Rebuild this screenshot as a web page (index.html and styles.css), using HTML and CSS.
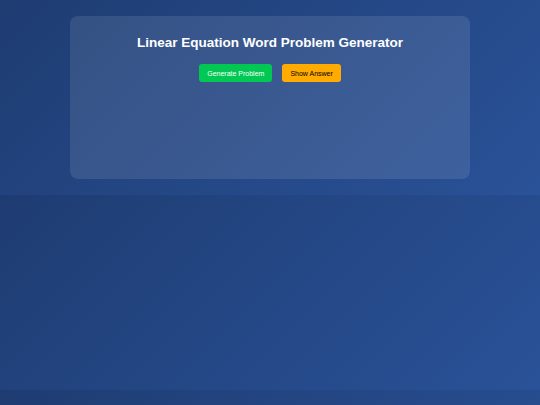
FILE: index.html
```html
<!DOCTYPE html>
<html lang="en">
<head>
<meta charset="utf-8">
<title>Linear Equation Word Problem Generator</title>
<link rel="stylesheet" href="styles.css">
</head>
<body>
  <main class="card">
    <h1 class="title">Linear Equation Word Problem Generator</h1>
    <div class="actions">
      <button class="btn btn-generate" type="button">Generate Problem</button>
      <button class="btn btn-answer" type="button">Show Answer</button>
    </div>
    <div class="output"></div>
  </main>
</body>
</html>
```
FILE: styles.css
```css
body {
  margin: 0;
  padding: 16px;
  font-family: "Liberation Sans", Arial, sans-serif;
  background: linear-gradient(135deg, #1e3c72, #2a5298);
  color: #fff;
}

.card {
  max-width: 400px;
  margin: 0 auto;
  box-sizing: border-box;
  padding: 19px 20px 20px;
  height: 163px;
  background: rgba(255, 255, 255, 0.1);
  border-radius: 8px;
  text-align: center;
}

.title {
  margin: 0 0 13px;
  font-size: 13.5px;
  font-weight: bold;
  line-height: 16px;
}

.actions {
  display: flex;
  justify-content: center;
  gap: 10px;
}

.btn {
  font-family: inherit;
  font-size: 7px;
  height: 18px;
  padding: 0 8px;
  border: none;
  border-radius: 3px;
}

.btn-generate {
  background: #00c853;
  color: #fff;
}

.btn-answer {
  background: #ffab00;
  color: #000;
}
```
